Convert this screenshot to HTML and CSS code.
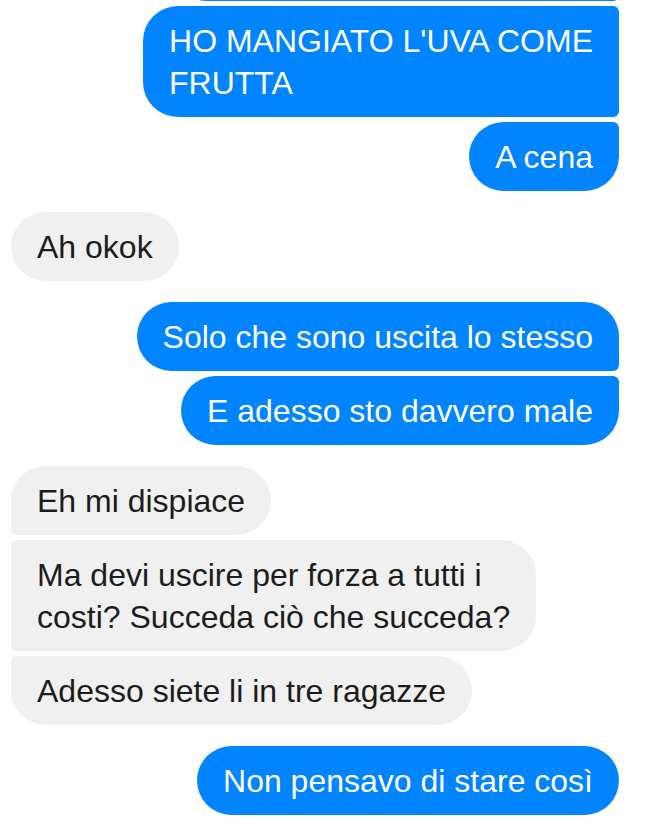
FILE: index.html
```html
<!DOCTYPE html>
<html lang="it">
<head>
    <meta charset="UTF-8">
    <meta name="viewport" content="width=device-width, initial-scale=1.0">
    <title>Chat</title>
    <link rel="stylesheet" href="styles.css">
</head>
<body>
    <div class="chat">
        <div class="group sent">
            <div class="msg msg-prev"></div>
            <div class="msg">HO MANGIATO L'UVA COME<br>FRUTTA</div>
            <div class="msg">A cena</div>
        </div>
        <div class="group received">
            <div class="msg">Ah okok</div>
        </div>
        <div class="group sent">
            <div class="msg">Solo che sono uscita lo stesso</div>
            <div class="msg">E adesso sto davvero male</div>
        </div>
        <div class="group received">
            <div class="msg">Eh mi dispiace</div>
            <div class="msg">Ma devi uscire per forza a tutti i<br>costi? Succeda ciò che succeda?</div>
            <div class="msg">Adesso siete li in tre ragazze</div>
        </div>
        <div class="group sent">
            <div class="msg">Non pensavo di stare così</div>
        </div>
    </div>
</body>
</html>
```

FILE: styles.css
```css
* {
    margin: 0;
    padding: 0;
    box-sizing: border-box;
}

body {
    font-family: "Liberation Sans", Arial, sans-serif;
    background: #fff;
    overflow: hidden;
}

.chat {
    display: flex;
    flex-direction: column;
    gap: 21px;
    padding: 0 40px 0 11px;
    margin-top: -67px;
}

.group {
    display: flex;
    flex-direction: column;
    gap: 5px;
}

.group.sent {
    align-items: flex-end;
}

.group.received {
    align-items: flex-start;
}

.msg {
    max-width: 540px;
    padding: 14px 26px 13px;
    font-size: 32px;
    line-height: 42px;
    border-radius: 35px;
    white-space: nowrap;
}

/* tail of the message scrolled off the top */
.msg-prev {
    width: 446px;
    height: 68px;
}

.sent .msg {
    background: #0084ff;
    color: #fff;
}

.received .msg {
    background: #f0f0f0;
    color: #1c1c1c;
}

/* grouped corners */
.sent .msg:not(:first-child) {
    border-top-right-radius: 6px;
}

.sent .msg:not(:last-child) {
    border-bottom-right-radius: 6px;
}

.received .msg:not(:first-child) {
    border-top-left-radius: 6px;
}

.received .msg:not(:last-child) {
    border-bottom-left-radius: 6px;
}
```
